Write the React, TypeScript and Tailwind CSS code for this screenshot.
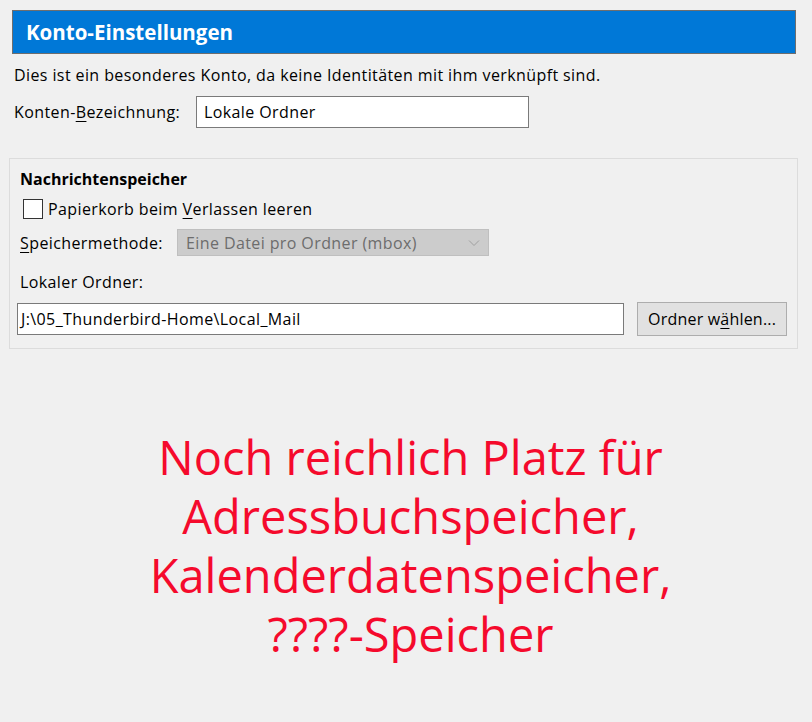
import React from 'react'

const ui = { fontFamily: '"Open Sans", "Noto Sans", sans-serif', letterSpacing: '0.4px' }

function U({ children }: { children: React.ReactNode }) {
  return <span className="underline underline-offset-[3px]">{children}</span>
}

export default function App() {
  return (
    <div className="w-[812px] h-[722px] bg-[#f0f0f0] text-[16px] text-black overflow-hidden" style={ui}>
      <div className="pt-[10px] pl-[12px] pr-[16px]">
        <div className="h-[44px] bg-[#0078d7] border border-[#6e6e6e] flex items-center pl-[13px]">
          <span className="text-white font-bold text-[20.5px] tracking-normal">Konto-Einstellungen</span>
        </div>
      </div>

      <div className="pl-[14px] mt-[10px] leading-[22px]">
        Dies ist ein besonderes Konto, da keine Identitäten mit ihm verknüpft sind.
      </div>

      <div className="flex items-center pl-[14px] mt-[10px]">
        <span className="w-[182px]">
          Konten-<U>B</U>ezeichnung:
        </span>
        <div className="w-[333px] h-[32px] bg-white border border-[#7a7a7a] flex items-center pl-[7px]">
          Lokale Ordner
        </div>
      </div>

      <div className="mx-[9px] mt-[30px] w-[789px] h-[191px] border border-[#dcdcdc] px-[10px] pt-[9px]">
        <div className="font-bold leading-[22px] tracking-normal">Nachrichtenspeicher</div>
        <div className="flex items-center mt-[8px] ml-[3px] leading-[22px]">
          <span className="w-[20px] h-[20px] bg-white border border-[#333] mr-[5px]" />
          <span>
            Papierkorb beim <U>V</U>erlassen leeren
          </span>
        </div>
        <div className="flex items-center mt-[9px]">
          <span className="w-[157px]">
            <U>S</U>peichermethode:
          </span>
          <div className="w-[312px] h-[27px] bg-[#cccccc] border border-[#bfbfbf] flex items-center justify-between pl-[8px] pr-[8px] text-[#6d6d6d]">
            <span>Eine Datei pro Ordner (mbox)</span>
            <svg width="12" height="8" viewBox="0 0 12 8" fill="none" stroke="#a0a0a0" strokeWidth="1">
              <path d="M1 1.5 L6 6.5 L11 1.5" />
            </svg>
          </div>
        </div>
        <div className="mt-[15px] leading-[22px]">Lokaler Ordner:</div>
        <div className="flex items-center mt-[9px] -ml-[3px]">
          <div className="w-[608px] h-[32px] bg-white border border-[#7a7a7a] flex items-center pl-[3px]">
            J:\05_Thunderbird-Home\Local_Mail
          </div>
          <button className="ml-[13px] w-[150px] h-[34px] bg-[#e1e1e1] border border-[#adadad] tracking-[0.2px]">
            Ordner w<U>ä</U>hlen...
          </button>
        </div>
      </div>

      <div
        className="mt-[79px] pl-[9px] text-center text-[#f50a2c] text-[47px] leading-[59px]"
        style={{ fontFamily: '"Open Sans", sans-serif', letterSpacing: '0px' }}
      >
        <div>Noch reichlich Platz für</div>
        <div>Adressbuchspeicher,</div>
        <div>Kalenderdatenspeicher,</div>
        <div>????-Speicher</div>
      </div>
    </div>
  )
}
